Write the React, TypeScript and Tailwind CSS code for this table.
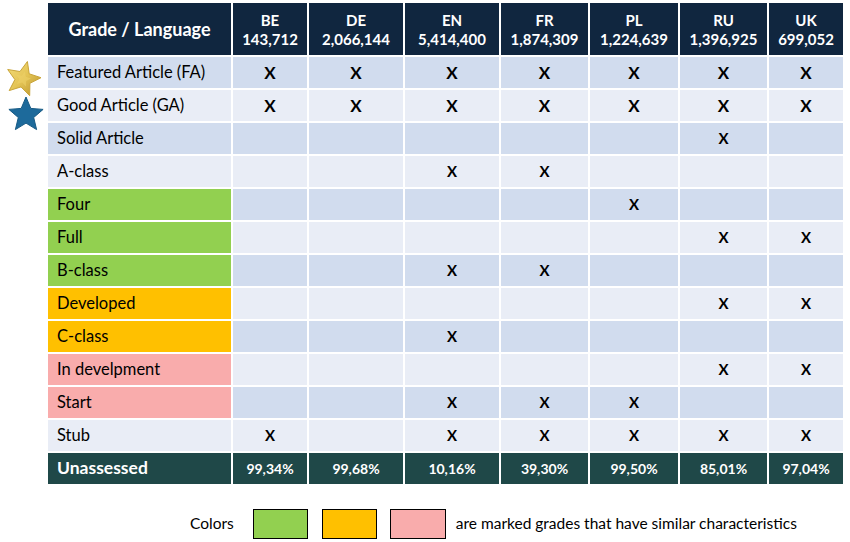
const LANGS = [
  { code: 'BE', count: '143,712', unassessed: '99,34%' },
  { code: 'DE', count: '2,066,144', unassessed: '99,68%' },
  { code: 'EN', count: '5,414,400', unassessed: '10,16%' },
  { code: 'FR', count: '1,874,309', unassessed: '39,30%' },
  { code: 'PL', count: '1,224,639', unassessed: '99,50%' },
  { code: 'RU', count: '1,396,925', unassessed: '85,01%' },
  { code: 'UK', count: '699,052', unassessed: '97,04%' },
]

type Grade = {
  label: string
  marks: string[]
  color?: string
  big?: boolean
  star?: 'gold' | 'blue'
}

const ALL = ['BE', 'DE', 'EN', 'FR', 'PL', 'RU', 'UK']

const GRADES: Grade[] = [
  { label: 'Featured Article (FA)', marks: ALL, big: true, star: 'gold' },
  { label: 'Good Article (GA)', marks: ALL, big: true, star: 'blue' },
  { label: 'Solid Article', marks: ['RU'] },
  { label: 'A-class', marks: ['EN', 'FR'] },
  { label: 'Four', marks: ['PL'], color: 'bg-[#92d050]' },
  { label: 'Full', marks: ['RU', 'UK'], color: 'bg-[#92d050]' },
  { label: 'B-class', marks: ['EN', 'FR'], color: 'bg-[#92d050]' },
  { label: 'Developed', marks: ['RU', 'UK'], color: 'bg-[#ffc000]' },
  { label: 'C-class', marks: ['EN'], color: 'bg-[#ffc000]' },
  { label: 'In develpment', marks: ['RU', 'UK'], color: 'bg-[#f9acac]' },
  { label: 'Start', marks: ['EN', 'FR', 'PL'], color: 'bg-[#f9acac]' },
  { label: 'Stub', marks: ['BE', 'EN', 'FR', 'PL', 'RU', 'UK'] },
]

function starPoints(cx: number, cy: number, r: number, rot: number) {
  const pts: string[] = []
  for (let i = 0; i < 10; i++) {
    const rad = i % 2 === 0 ? r : r * 0.45
    const a = ((rot - 90 + i * 36) * Math.PI) / 180
    pts.push(`${(cx + rad * Math.cos(a)).toFixed(1)},${(cy + rad * Math.sin(a)).toFixed(1)}`)
  }
  return pts.join(' ')
}

function GoldStar() {
  return (
    <svg width="40" height="40" viewBox="0 0 40 40" className="absolute left-[-45px] top-[1px]">
      <defs>
        <linearGradient id="gold" x1="0" y1="0" x2="1" y2="1">
          <stop offset="0" stopColor="#f4dc7a" />
          <stop offset="0.5" stopColor="#e3c354" />
          <stop offset="1" stopColor="#b8922a" />
        </linearGradient>
      </defs>
      <polygon points={starPoints(20, 21, 18, 14)} fill="url(#gold)" stroke="#c9a53a" strokeWidth="1" strokeLinejoin="round" />
      <polygon points={starPoints(20, 21, 8, 14)} fill="#ecd068" opacity="0.6" />
    </svg>
  )
}

function BlueStar() {
  return (
    <svg width="40" height="40" viewBox="0 0 40 40" className="absolute left-[-41px] top-[5px]">
      <polygon points={starPoints(19, 20, 18, 0)} fill="#1d6a9b" stroke="#175a85" strokeWidth="1" strokeLinejoin="round" />
    </svg>
  )
}

export default function App() {
  return (
    <div className="w-[850px] h-[542px] bg-white pt-[3px] font-['Lato','Liberation_Sans',sans-serif] text-black">
      <div className="ml-[48px] grid w-[795px] grid-cols-[183px_74px_94px_94px_87px_88px_87px_74px] grid-rows-[52px_repeat(13,31px)] gap-[2px] bg-white">
        <div className="flex items-center justify-center bg-[#10263f] text-[18px] font-bold text-white">
          Grade / Language
        </div>
        {LANGS.map((l) => (
          <div
            key={l.code}
            className="flex flex-col items-center justify-center bg-[#10263f] pt-[1px] text-[15px] font-bold leading-[19px] text-white"
          >
            <span>{l.code}</span>
            <span>{l.count}</span>
          </div>
        ))}

        {GRADES.map((g, i) => {
          const rowBg = i % 2 === 0 ? 'bg-[#d1dcee]' : 'bg-[#e9edf6]'
          return (
            <div key={g.label} className="contents">
              <div className={`relative flex items-center pl-[9px] text-[16.5px] ${g.color ?? rowBg}`}>
                {g.star === 'gold' && <GoldStar />}
                {g.star === 'blue' && <BlueStar />}
                {g.label}
              </div>
              {ALL.map((c) => (
                <div
                  key={c}
                  className={`flex items-center justify-center font-bold ${rowBg} ${g.big ? 'text-[17px]' : 'text-[15px]'}`}
                >
                  {g.marks.includes(c) ? 'X' : ''}
                </div>
              ))}
            </div>
          )
        })}

        <div className="flex items-center bg-[#1f4848] pl-[9px] text-[17.5px] font-bold text-white">Unassessed</div>
        {LANGS.map((l) => (
          <div key={l.code} className="flex items-center justify-center bg-[#1f4848] text-[14px] font-bold text-white">
            {l.unassessed}
          </div>
        ))}
      </div>

      <div className="mt-[25px] flex items-center pl-[190px] text-[15.5px]">
        <span className="mr-[19px]">Colors</span>
        <span className="mr-[14px] h-[30px] w-[55px] border-[1.5px] border-black bg-[#92d050]" />
        <span className="mr-[13px] h-[30px] w-[55px] border-[1.5px] border-black bg-[#ffc000]" />
        <span className="mr-[10px] h-[30px] w-[56px] border-[1.5px] border-black bg-[#f9acac]" />
        <span>are marked grades that have similar characteristics</span>
      </div>
    </div>
  )
}
